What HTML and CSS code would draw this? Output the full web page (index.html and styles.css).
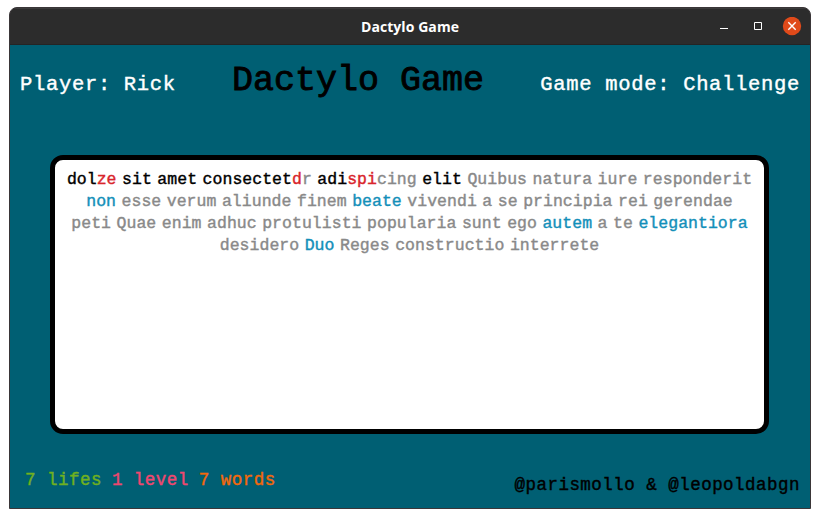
FILE: index.html
```html
<!DOCTYPE html>
<html lang="en">
<head>
<meta charset="utf-8">
<title>Dactylo Game</title>
<link rel="stylesheet" href="styles.css">
</head>
<body>
<div class="window">
  <header class="titlebar">
    <span class="caption">Dactylo Game</span>
    <div class="controls">
      <svg width="12" height="19" viewBox="0 0 12 19"><path d="M2 11.500h8" stroke="#fff" fill="none"/></svg>
      <svg width="12" height="19" viewBox="0 0 12 19"><path d="M2.500 5.500h7v7h-7z" stroke="#fff" fill="none"/></svg>
      <svg width="20" height="19" viewBox="0 0 20 19"><circle cx="10" cy="9" r="9.200" fill="#e04a1a"/><path d="M6.300 5.300l7.400 7.400M13.700 5.300l-7.400 7.400" stroke="#fff" stroke-width="1.400" fill="none"/></svg>
    </div>
  </header>
  <main class="game">
    <div class="top">
      <span class="info">Player: Rick</span>
      <h1 class="name">Dactylo Game</h1>
      <span class="info">Game mode: Challenge</span>
    </div>
    <section class="board">
      <div class="line"><span class="done">dol<b class="bad">ze</b></span><span class="done">sit</span><span class="done">amet</span><span><b class="done">consectet</b><b class="bad">d</b>r</span><span><b class="done">adi</b><b class="bad">spi</b>cing</span><span class="done">elit</span><span>Quibus</span><span>natura</span><span>iure</span><span>responderit</span></div>
      <div class="line"><span class="bonus">non</span><span>esse</span><span>verum</span><span>aliunde</span><span>finem</span><span class="bonus">beate</span><span>vivendi</span><span>a</span><span>se</span><span>principia</span><span>rei</span><span>gerendae</span></div>
      <div class="line"><span>peti</span><span>Quae</span><span>enim</span><span>adhuc</span><span>protulisti</span><span>popularia</span><span>sunt</span><span>ego</span><span class="bonus">autem</span><span>a</span><span>te</span><span class="bonus">elegantiora</span></div>
      <div class="line"><span>desidero</span><span class="bonus">Duo</span><span>Reges</span><span>constructio</span><span>interrete</span></div>
    </section>
    <footer class="bottom">
      <div class="stats"><span class="lifes">7 lifes</span><span class="level">1 level</span><span class="words">7 words</span></div>
      <span class="credits">@parismollo &amp; @leopoldabgn</span>
    </footer>
  </main>
</div>
</body>
</html>
```
FILE: styles.css
```css
* { box-sizing: border-box; }
body { margin: 0; padding: 7px 9px 0; background: #fff; font-family: "Liberation Mono", monospace; }
.window { width: 802px; height: 502px; border: 1px solid #3a3638; border-radius: 8px 8px 0 0; overflow: hidden; display: flex; flex-direction: column; background: #2c2c2c; }
.titlebar { height: 37px; flex: none; display: grid; grid-template-columns: 1fr auto 1fr; align-items: center; border-top: 1px solid #3c3c3c; border-bottom: 1px solid #242424; color: #fff; }
.caption { grid-column: 2; font: bold 14px/20px "Open Sans", sans-serif; letter-spacing: 0.07px; }
.controls { justify-self: end; display: flex; gap: 22px; padding-right: 8px; }
.controls svg:last-child { margin-left: -4px; }
.game { flex: 1; background: #005f73; display: flex; flex-direction: column; -webkit-text-stroke: 0.4px currentColor; }
.top { height: 110px; padding: 17px 10px 0 10px; display: flex; justify-content: space-between; align-items: baseline; align-content: start; }
.info { font-size: 20.5px; letter-spacing: 0.68px; line-height: 40px; color: #fff; white-space: nowrap; }
.name { margin: 0; font-size: 35px; font-weight: normal; letter-spacing: 0; line-height: 38px; color: #000; white-space: nowrap; -webkit-text-stroke-width: 0.9px; }
.board { width: 719px; height: 279px; flex: none; margin-left: 40px; padding: 9px 0 0; border: 5px solid #000; border-radius: 13px; background: #fff; color: #898989; }
.line { display: flex; justify-content: center; gap: 5.5px; height: 22px; font-size: 16.5px; line-height: 22px; letter-spacing: 0.03px; white-space: nowrap; }
.line b { font-weight: normal; }
.done, .line b.done { color: #000; }
.line b.bad { color: #d9252b; }
.bonus { color: #138fb9; }
.bottom { flex: 1; display: flex; justify-content: space-between; align-items: flex-start; padding: 36px 10px 0 15px; font-size: 17.5px; line-height: 20px; letter-spacing: 0.48px; white-space: nowrap; }
.stats { display: flex; gap: 10px; }
.lifes { color: #70b020; }
.level { color: #ef476f; }
.words { color: #f3680b; }
.credits { color: #000; margin-top: 5px; }
```
